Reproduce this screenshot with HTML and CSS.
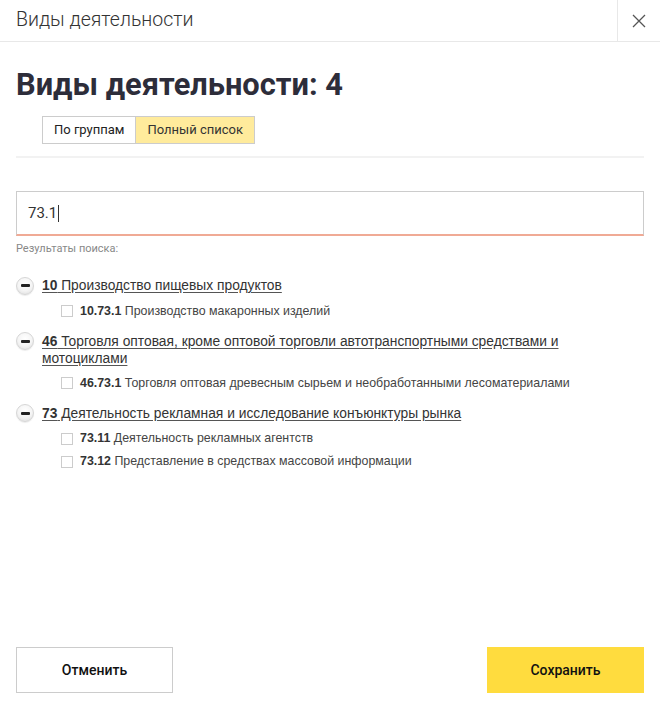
FILE: index.html
```html
<!DOCTYPE html>
<html lang="ru">
<head>
<meta charset="utf-8">
<link rel="stylesheet" href="styles.css">
</head>
<body>
<div class="modal">
  <header class="topbar">
    <div class="topbar-title">Виды деятельности</div>
    <button class="close" aria-label="Закрыть">
      <svg width="14" height="14" viewBox="0 0 14 14"><path d="M1 1L13 13M13 1L1 13" stroke="#555" stroke-width="1.3" fill="none"/></svg>
    </button>
  </header>
  <main class="content">
    <h1 class="heading">Виды деятельности: 4</h1>
    <div class="tabs">
      <span class="tab">По группам</span>
      <span class="tab active">Полный список</span>
    </div>
    <hr class="divider">
    <div class="search">73.1<span class="caret"></span></div>
    <div class="hint">Результаты поиска:</div>
    <ul class="groups">
      <li class="group">
        <div class="group-row"><span class="minus"></span><a class="group-link"><span class="code">10</span> Производство пищевых продуктов</a></div>
        <ul class="items">
          <li class="item"><span class="check"></span><span><b>10.73.1</b> Производство макаронных изделий</span></li>
        </ul>
      </li>
      <li class="group">
        <div class="group-row"><span class="minus"></span><a class="group-link"><span class="code">46</span> Торговля оптовая, кроме оптовой торговли автотранспортными средствами и мотоциклами</a></div>
        <ul class="items">
          <li class="item"><span class="check"></span><span><b>46.73.1</b> Торговля оптовая древесным сырьем и необработанными лесоматериалами</span></li>
        </ul>
      </li>
      <li class="group">
        <div class="group-row"><span class="minus"></span><a class="group-link"><span class="code">73</span> Деятельность рекламная и исследование конъюнктуры рынка</a></div>
        <ul class="items">
          <li class="item"><span class="check"></span><span><b>73.11</b> Деятельность рекламных агентств</span></li>
          <li class="item"><span class="check"></span><span><b>73.12</b> Представление в средствах массовой информации</span></li>
        </ul>
      </li>
    </ul>
  </main>
  <footer class="footer">
    <button class="btn btn-cancel">Отменить</button>
    <button class="btn btn-save">Сохранить</button>
  </footer>
</div>
</body>
</html>
```
FILE: styles.css
```css
* { box-sizing: border-box; }
html, body { margin: 0; padding: 0; background: #fff; }
body { font-family: "Liberation Sans", Arial, sans-serif; color: #333; width: 660px; height: 709px; overflow: hidden; }
.modal { display: flex; flex-direction: column; height: 709px; }
.topbar { display: flex; height: 42px; border-bottom: 1px solid #e8e8e8; flex: none; }
.topbar-title { flex: 1; padding: 0 16px; line-height: 40px; font-family: Roboto, sans-serif; font-weight: 300; font-size: 19.5px; color: #333; }
.close { width: 43px; border: 0; border-left: 1px solid #e8e8e8; background: #fff; display: flex; align-items: center; justify-content: center; padding: 0; }
.content { flex: 1; padding: 0 16px 0 16px; }
.heading { margin: 26px 0 0; font-family: Roboto, sans-serif; font-weight: 700; font-size: 30.8px; line-height: 33px; color: #2d2d3a; }
.tabs { display: flex; margin: 15px 0 0 26px; }
.tab { height: 28px; line-height: 26px; padding: 0 11px; border: 1px solid #ccc; font-family: Roboto, sans-serif; font-size: 13px; color: #222; background: #fff; }
.tab.active { background: #ffeb9c; border-color: #ccc; border-left: 0; color: #333; }
.divider { border: 0; border-top: 2px solid #f2f2f2; margin: 12px 0 0; }
.search { margin-top: 33px; height: 45px; border: 1px solid #ccc; border-bottom: 2px solid #f0aa95; padding: 0 11px; font-family: Roboto, sans-serif; font-size: 15px; line-height: 42px; color: #333; display: flex; align-items: center; }
.caret { display: inline-block; width: 1px; height: 17px; background: #333; margin-left: 1px; }
.hint { margin-top: 6px; font-size: 11px; color: #888; line-height: 14px; font-family: Roboto, sans-serif; }
.groups { list-style: none; margin: 21px 0 0; padding: 0; }
.group { margin-bottom: 10px; }
.group-row { display: flex; align-items: flex-start; gap: 8px; }
.minus { flex: none; width: 18px; height: 18px; margin-top: -0.5px; border-radius: 50%; background: radial-gradient(circle at 50% 35%, #fff 0%, #f4f4f4 55%, #dadada 100%); border: 1px solid #d6d6d6; box-shadow: 0 1px 1px rgba(0,0,0,0.08); position: relative; }
.minus::after { content: ""; position: absolute; left: 3.5px; right: 3.5px; top: 6.5px; height: 3px; background: #222; border-radius: 1px; }
.group-link { font-size: 13.8px; line-height: 17px; color: #333; text-decoration: underline; text-decoration-color: #555; text-underline-offset: 2px; }
.code { font-weight: 700; }
.items { list-style: none; margin: 5px 0 0; padding: 0 0 0 45px; }
.item { display: flex; align-items: center; gap: 7px; font-size: 12.4px; line-height: 23px; color: #444; }
.item b { color: #333; }
.check { flex: none; width: 12px; height: 12px; border: 1px solid #ccc; background: #fff; }
.footer { flex: none; display: flex; justify-content: space-between; padding: 0 16px 16px; }
.btn { width: 157px; height: 46px; font-family: Roboto, sans-serif; font-weight: 500; font-size: 14px; color: #111; cursor: pointer; }
.btn-cancel { background: #fff; border: 1px solid #ccc; }
.btn-save { background: #ffdc3e; border: 0; }
```
